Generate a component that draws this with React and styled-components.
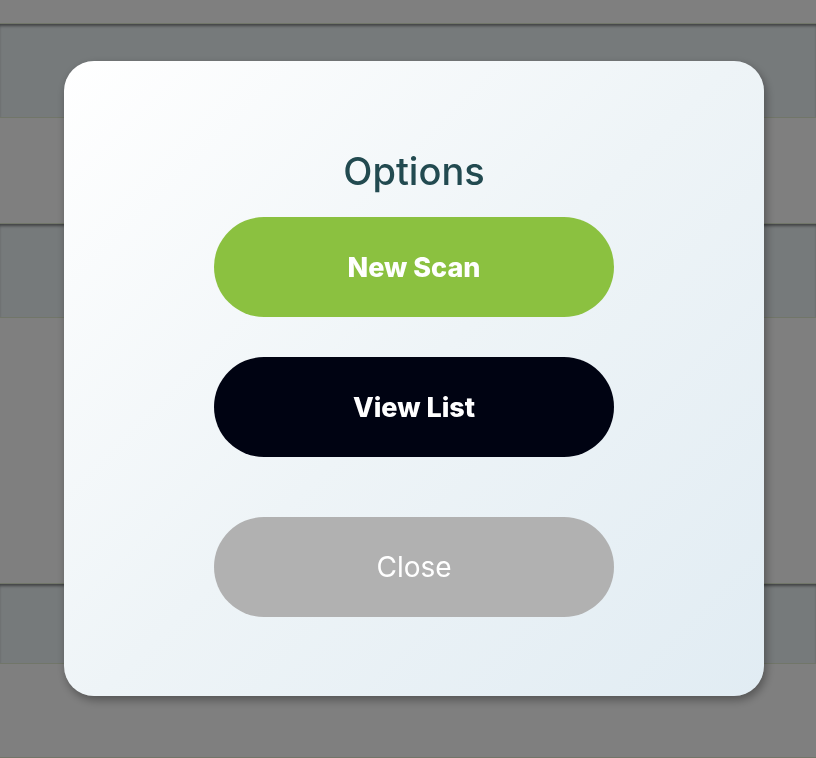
import React from "react";
import styled, { createGlobalStyle } from "styled-components";

const Global = createGlobalStyle`
  html, body { margin: 0; padding: 0; background: #ffffff; }
  body { font-family: Inter, "Noto Sans", Roboto, sans-serif; overflow: hidden; }
  * { box-sizing: border-box; }
`;

const Page = styled.div`
  display: flex;
  flex-direction: column;
  height: 758px;
`;

const Row = styled.div`
  height: ${(p) => p.$h}px;
  flex: ${(p) => (p.$grow ? "1 0 auto" : "0 0 auto")};
  background: ${(p) => (p.$tint ? "#edf4f7" : "#ffffff")};
  border-bottom: 1px solid #e2ecd2;
  box-shadow: ${(p) => (p.$tint ? "inset 0 3px 3px -1px rgba(0,0,0,0.45)" : "none")};
`;

const Overlay = styled.div`
  position: fixed;
  inset: 0;
  background: rgba(0, 0, 0, 0.5);
  display: flex;
  align-items: flex-start;
  justify-content: center;
  padding-left: 12px;
  padding-top: 61px;
`;

const Modal = styled.div`
  width: 700px;
  height: 635px;
  border-radius: 30px;
  background: linear-gradient(135deg, #ffffff 0%, #eef4f7 50%, #e1ecf3 100%);
  box-shadow: 2px 4px 10px rgba(0, 0, 0, 0.35);
  display: flex;
  flex-direction: column;
  align-items: center;
  padding-top: 88px;
`;

const Title = styled.h2`
  margin: 0 0 24px;
  font-size: 38px;
  line-height: 44px;
  font-weight: 500;
  color: #224a50;
`;

const Button = styled.button`
  width: 400px;
  height: 100px;
  border: none;
  border-radius: 50px;
  margin-bottom: ${(p) => p.$mb || 0}px;
  background: ${(p) => p.$bg};
  color: #ffffff;
  font-family: Inter, "Noto Sans", sans-serif;
  font-size: ${(p) => (p.$bold ? 27 : 28)}px;
  font-weight: ${(p) => (p.$bold ? 800 : 400)};
  cursor: pointer;
`;

const rows = [
  { h: 24 },
  { h: 94, tint: true },
  { h: 106 },
  { h: 94, tint: true },
  { h: 266 },
  { h: 80, tint: true },
  { h: 94, grow: true },
];

export default function App() {
  return (
    <>
      <Global />
      <Page>
        {rows.map((r, i) => (
          <Row key={i} $h={r.h} $tint={r.tint} $grow={r.grow} />
        ))}
      </Page>
      <Overlay>
        <Modal>
          <Title>Options</Title>
          <Button $bg="#8bc140" $bold $mb={40}>New Scan</Button>
          <Button $bg="#000312" $bold $mb={60}>View List</Button>
          <Button $bg="#b1b1b1">Close</Button>
        </Modal>
      </Overlay>
    </>
  );
}
